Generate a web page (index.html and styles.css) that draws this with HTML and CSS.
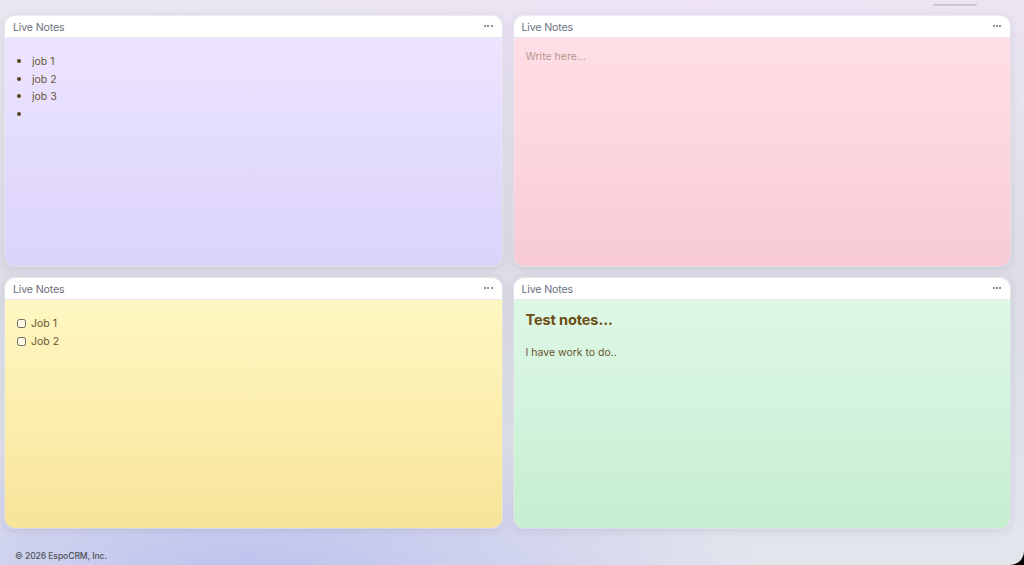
FILE: index.html
```html
<!DOCTYPE html>
<html lang="en">
<head>
<meta charset="utf-8">
<title>Live Notes</title>
<link rel="stylesheet" href="styles.css">
</head>
<body>
<div class="app">
  <div class="topbar-indicator"></div>
  <main class="grid">
    <section class="panel panel-purple">
      <header class="panel-head">
        <span class="panel-title">Live Notes</span>
        <span class="dots"><i></i><i></i><i></i></span>
      </header>
      <div class="panel-body">
        <ul class="bullets">
          <li>job 1</li>
          <li>job 2</li>
          <li>job 3</li>
          <li>&nbsp;</li>
        </ul>
      </div>
    </section>
    <section class="panel panel-pink">
      <header class="panel-head">
        <span class="panel-title">Live Notes</span>
        <span class="dots"><i></i><i></i><i></i></span>
      </header>
      <div class="panel-body">
        <p class="placeholder">Write here...</p>
      </div>
    </section>
    <section class="panel panel-yellow">
      <header class="panel-head">
        <span class="panel-title">Live Notes</span>
        <span class="dots"><i></i><i></i><i></i></span>
      </header>
      <div class="panel-body">
        <ul class="checks">
          <li><span class="box"></span>Job 1</li>
          <li><span class="box"></span>Job 2</li>
        </ul>
      </div>
    </section>
    <section class="panel panel-green">
      <header class="panel-head">
        <span class="panel-title">Live Notes</span>
        <span class="dots"><i></i><i></i><i></i></span>
      </header>
      <div class="panel-body">
        <h2 class="note-heading">Test notes...</h2>
        <p class="note-text">I have work to do..</p>
      </div>
    </section>
  </main>
  <footer class="footer">© 2026 EspoCRM, Inc.</footer>
</div>
</body>
</html>
```
FILE: styles.css
```css
* { box-sizing: border-box; }
html, body {
  margin: 0;
  height: 100%;
  background: #000;
  overflow: hidden;
}
body {
  font-family: Inter, "Noto Sans", "Liberation Sans", sans-serif;
}
.app {
  position: relative;
  width: 1024px;
  height: 565px;
  border-radius: 0 0 14px 0;
  overflow: hidden;
  background:
    radial-gradient(ellipse 520px 150px at 250px 575px, rgba(186,190,238,0.95), rgba(186,190,238,0) 100%),
    radial-gradient(ellipse 600px 200px at 700px 0px, rgba(236,226,244,1), rgba(236,226,244,0) 100%),
    linear-gradient(180deg, #e9e8f0 0%, #dcdde6 50%, #e4e6ee 100%);
  display: flex;
  flex-direction: column;
}
.topbar-indicator {
  position: absolute;
  left: 933px;
  top: 4px;
  width: 44px;
  height: 2px;
  border-radius: 1px;
  background: #c9c6d6;
}
.grid {
  display: grid;
  grid-template-columns: 1fr 1fr;
  grid-template-rows: 250px 250px;
  gap: 12px;
  padding: 16px 14px 0 5px;
}
.panel {
  border-radius: 10px;
  overflow: hidden;
  display: flex;
  flex-direction: column;
  box-shadow: 0 2px 10px rgba(90, 90, 120, 0.18), 0 0 0 1px rgba(255,255,255,0.5);
}
.panel-head {
  height: 22px;
  flex: none;
  background: #fff;
  border-bottom: 1px solid #e8e6ee;
  display: flex;
  align-items: center;
  justify-content: space-between;
  padding: 0 9px 0 8px;
}
.panel-title {
  font-size: 10.6px;
  color: #6b7080;
  letter-spacing: -0.15px;
  margin-top: 1px;
}
.dots {
  display: flex;
  gap: 1.2px;
  margin-top: -1px;
}
.dots i {
  width: 2px;
  height: 2px;
  border-radius: 50%;
  background: #6a6e78;
}
.panel-body {
  flex: 1;
  padding: 11px 12px;
  font-size: 10.5px;
  line-height: 17.5px;
  color: #6a5434;
}
.panel-purple .panel-body { background: linear-gradient(180deg, #ede5ff 0%, #e4dcfd 45%, #dcd3fa 100%); }
.panel-pink .panel-body { background: linear-gradient(180deg, #ffdee6 0%, #fcd6df 50%, #f7cad6 100%); }
.panel-yellow .panel-body { background: linear-gradient(180deg, #fff7c2 0%, #fbeeae 50%, #f7e49a 100%); }
.panel-green .panel-body { background: linear-gradient(180deg, #def8e6 0%, #d2f3dc 50%, #c6eecf 100%); }

.bullets {
  margin: 3px 0 0;
  padding-left: 15px;
}
.bullets li {
  height: 17.5px;
}
.bullets li::marker { color: #5a4320; font-size: 12px; }
.placeholder {
  margin: -1px 0 0;
  color: #b5988f;
}
.checks {
  list-style: none;
  margin: 4px 0 0;
  padding: 0;
}
.checks li {
  display: flex;
  align-items: center;
  gap: 5px;
}
.box {
  width: 9px;
  height: 9px;
  border: 1px solid #6d6a66;
  border-radius: 2.5px;
  background: #fffbe6;
}
.note-heading {
  margin: -1px 0 0;
  font-size: 14.5px;
  line-height: 20px;
  font-weight: 700;
  color: #6b4c10;
  letter-spacing: -0.1px;
}
.note-text {
  margin: 14px 0 0;
  color: #6b5430;
}
.footer {
  padding: 23px 0 0 15px;
  font-size: 8.6px;
  font-weight: 500;
  color: #4f5258;
  letter-spacing: -0.1px;
}
```
